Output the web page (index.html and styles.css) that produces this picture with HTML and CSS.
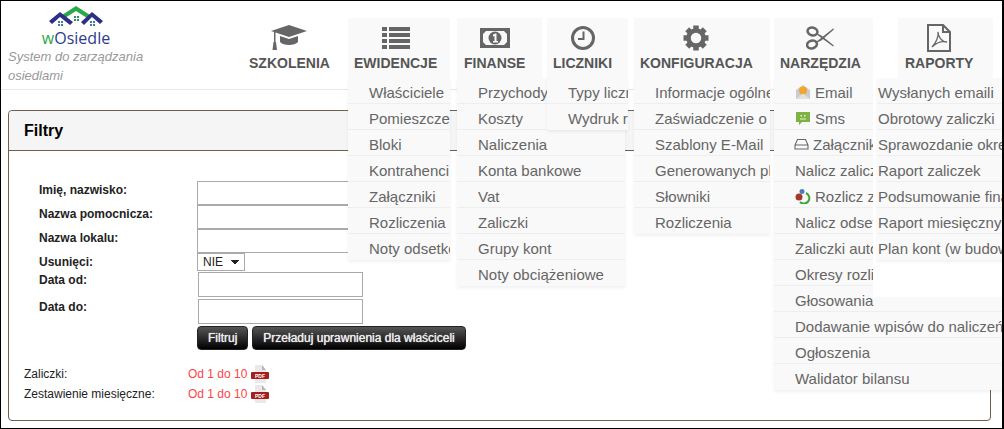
FILE: index.html
```html
<!DOCTYPE html>
<html>
<head>
    <title>wOsiedle</title>
    <link rel="stylesheet" href="styles.css">
</head>
<body>
    <div class="frame">
        <header class="header">
            <div class="brand">
                <div class="logo">
                    <svg class="logo-mark" width="56" height="22" viewBox="0 0 56 22">
                        <path d="M14 9 L28 0 L42 9 L39 12 L28 5 L17 12 Z" fill="#2aa84a"/>
                        <path d="M1 15 L12 6 L25 16 L22 19 L12 11 L4 18 Z" fill="#2e2f86"/>
                        <path d="M33 16 L44 6 L55 15 L52 18 L44 11 L36 19 Z" fill="#2e2f86"/>
                        <path d="M26 10h2v2h-2zM29 10h2v2h-2zM26 13h2v2h-2zM29 13h2v2h-2z" fill="#2e8c6a"/>
                        <path d="M10 15h2v2h-2zM13 15h2v2h-2zM10 18h2v2h-2zM13 18h2v2h-2z" fill="#3b7fa0"/>
                        <path d="M42 15h2v2h-2zM45 15h2v2h-2zM42 18h2v2h-2zM45 18h2v2h-2z" fill="#3b7fa0"/>
                    </svg>
                    <div class="logo-name"><span class="logo-w">w</span>Osiedle</div>
                </div>
                <div class="tagline">System do zarządzania osiedlami</div>
            </div>
            <nav class="nav">
                <div class="nav-item nav-plain nav-szkolenia">
                    <div class="nav-head">
                        <svg class="nav-icon" width="36" height="26" viewBox="0 0 36 26">
                            <path d="M0 6 L18 0 L36 6 L18 12 Z" fill="#666"/>
                            <path d="M9 11 L18 14 L27 11 L27 17 C24 21 12 21 9 17 Z" fill="#666"/>
                            <rect x="3" y="7" width="1.5" height="10" fill="#666"/>
                            <path d="M2.5 17 L5 17 L6 25 L1.500 25 Z" fill="#666"/>
                        </svg>
                        <div class="nav-label">SZKOLENIA</div>
                    </div>
                </div>
                <div class="nav-item nav-ewidencje">
                    <div class="nav-head">
                        <svg class="nav-icon" width="28" height="22" viewBox="0 0 28 22">
                            <path d="M0 0h5v4H0zM7 0h21v4H7zM0 6h5v4H0zM7 6h21v4H7zM0 12h5v4H0zM7 12h21v4H7zM0 18h5v4H0zM7 18h21v4H7z" fill="#666"/>
                        </svg>
                        <div class="nav-label">EWIDENCJE</div>
                    </div>
                    <ul class="dropdown">
                        <li>Właściciele</li>
                        <li>Pomieszczenia</li>
                        <li>Bloki</li>
                        <li>Kontrahenci</li>
                        <li>Załączniki</li>
                        <li>Rozliczenia</li>
                        <li>Noty odsetkowe</li>
                    </ul>
                </div>
                <div class="nav-item nav-finanse">
                    <div class="nav-head">
                        <svg class="nav-icon" width="30" height="20" viewBox="0 0 30 20">
                            <path fill-rule="evenodd" d="M0 0h30v20H0zM6 3 L3 6v8l3 3h18l3-3V6l-3-3z" fill="#666"/>
                            <circle cx="15" cy="10" r="6.500" fill="#666"/>
                            <path d="M13 6.500 L15.500 5.500 L16.500 5.500 L16.500 13 L18 13 L18 14.500 L13 14.500 L13 13 L14.500 13 L14.500 8 L13 8.500 Z" fill="#f9f9f9"/>
                        </svg>
                        <div class="nav-label">FINANSE</div>
                    </div>
                    <ul class="dropdown">
                        <li>Przychody</li>
                        <li>Koszty</li>
                        <li>Naliczenia</li>
                        <li>Konta bankowe</li>
                        <li>Vat</li>
                        <li>Zaliczki</li>
                        <li>Grupy kont</li>
                        <li>Noty obciążeniowe</li>
                    </ul>
                </div>
                <div class="nav-item nav-liczniki">
                    <div class="nav-head">
                        <svg class="nav-icon" width="26" height="26" viewBox="0 0 26 26">
                            <circle cx="13" cy="13" r="10.500" fill="none" stroke="#666" stroke-width="3"/>
                            <path d="M13.500 6.500v7.500H8" fill="none" stroke="#666" stroke-width="2"/>
                        </svg>
                        <div class="nav-label">LICZNIKI</div>
                    </div>
                    <ul class="dropdown">
                        <li>Typy liczników</li>
                        <li>Wydruk raportu</li>
                    </ul>
                </div>
                <div class="nav-item nav-konfiguracja">
                    <div class="nav-head">
                        <svg class="nav-icon" width="26" height="26" viewBox="-13 -13 26 26">
                            <g stroke="#666" stroke-width="5.500">
                                <line x1="-12.500" y1="0" x2="12.500" y2="0"/>
                                <line x1="0" y1="-12.500" x2="0" y2="12.500"/>
                                <line x1="-8.800" y1="-8.800" x2="8.800" y2="8.800"/>
                                <line x1="-8.800" y1="8.800" x2="8.800" y2="-8.800"/>
                            </g>
                            <circle r="7.500" fill="#f9f9f9" stroke="#666" stroke-width="4.500"/>
                        </svg>
                        <div class="nav-label">KONFIGURACJA</div>
                    </div>
                    <ul class="dropdown">
                        <li>Informacje ogólne</li>
                        <li>Zaświadczenie o saldzie</li>
                        <li>Szablony E-Mail</li>
                        <li>Generowanych plików</li>
                        <li>Słowniki</li>
                        <li>Rozliczenia</li>
                    </ul>
                </div>
                <div class="nav-item nav-narzedzia">
                    <div class="nav-head">
                        <svg class="nav-icon" width="28" height="24" viewBox="0 0 28 24">
                            <g fill="none" stroke="#666">
                                <ellipse cx="6.500" cy="5.500" rx="5" ry="3.800" stroke-width="2.500" transform="rotate(15 6.500 5.500)"/>
                                <ellipse cx="6" cy="18.500" rx="5" ry="3.800" stroke-width="2.500" transform="rotate(-15 6 18.500)"/>
                                <path d="M11 8 L27.500 20 L15 10 Z" stroke-width="1.200"/>
                                <path d="M11 16 L27.500 3 L15 14 Z" stroke-width="1.200"/>
                            </g>
                        </svg>
                        <div class="nav-label">NARZĘDZIA</div>
                    </div>
                    <ul class="dropdown dropdown-wide">
                        <li>
                            <svg class="row-icon" width="16" height="16" viewBox="0 0 16 16">
                                <path d="M1 6 L8 1 L15 6 V15 H1 Z" fill="#c9ccd2"/>
                                <circle cx="8" cy="6.500" r="4" fill="#f5a623"/>
                                <path d="M1 15 L8 9.500 L15 15 Z" fill="#dfe1e5"/>
                            </svg>Email
                        </li>
                        <li>
                            <svg class="row-icon" width="16" height="16" viewBox="0 0 16 16">
                                <path d="M1 2h14v10H7l-3 3v-3H1z" fill="#7cb342"/>
                                <path d="M5.500 5h1.500v1.500H5.500zM9 5h1.500v1.500H9zM5 8.500h6v1H5z" fill="#e6f2d5"/>
                            </svg>Sms
                        </li>
                        <li class="row-tight">
                            <svg class="row-icon" width="15" height="16" viewBox="0 0 15 16">
                                <path d="M3.500 3.500h8L14 9v4H1V9zM1 9h13" fill="none" stroke="#666" stroke-width="1.100"/>
                            </svg>Załączniki
                        </li>
                        <li>Nalicz zaliczki</li>
                        <li>
                            <svg class="row-icon" width="16" height="16" viewBox="0 0 16 16">
                                <path d="M11 5 A5.500 5.500 0 1 1 5 14" fill="none" stroke="#3aa935" stroke-width="2"/>
                                <circle cx="7" cy="3.500" r="2.500" fill="#4a7ebb"/>
                                <circle cx="4" cy="9" r="3.500" fill="#a5392c"/>
                            </svg>Rozlicz zaliczki
                        </li>
                        <li>Nalicz odsetki</li>
                        <li>Zaliczki automatyczne</li>
                        <li>Okresy rozliczeniowe</li>
                        <li>Głosowania</li>
                        <li>Dodawanie wpisów do naliczeń</li>
                        <li>Ogłoszenia</li>
                        <li>Walidator bilansu</li>
                    </ul>
                </div>
                <div class="nav-item nav-raporty">
                    <div class="nav-head">
                        <svg class="nav-icon" width="24" height="28" viewBox="0 0 24 28">
                            <path d="M1 1h15l7 7v19H1zM16 1v7h7" fill="none" stroke="#666" stroke-width="2"/>
                            <path d="M5 23 C9 19 12 12 11 8 C11 13 15 18 20 18 C15 17 9 19 5 23 Z" fill="none" stroke="#666" stroke-width="1.300"/>
                        </svg>
                        <div class="nav-label">RAPORTY</div>
                    </div>
                    <div class="dropdown-cover">
                        <ul class="dropdown dropdown-inner">
                            <li>Wysłanych emaili</li>
                            <li>Obrotowy zaliczki</li>
                            <li>Sprawozdanie okresowe</li>
                            <li>Raport zaliczek</li>
                            <li>Podsumowanie finansowe</li>
                            <li>Raport miesięczny</li>
                            <li>Plan kont (w budowie)</li>
                        </ul>
                    </div>
                </div>
            </nav>
        </header>

        <section class="panel">
            <h2 class="panel-title">Filtry</h2>
            <div class="panel-body">
                <form class="filter-form">
                    <label class="filter-label" for="name">Imię, nazwisko:</label>
                    <input class="filter-input" type="text" id="name" />
                    <label class="filter-label" for="alias">Nazwa pomocnicza:</label>
                    <input class="filter-input" type="text" id="alias" />
                    <label class="filter-label" for="local">Nazwa lokalu:</label>
                    <input class="filter-input" type="text" id="local" />
                    <label class="filter-label" for="deleted">Usunięci:</label>
                    <select class="filter-select" id="deleted"><option>NIE</option></select>
                    <label class="filter-label filter-label-date" for="date_from">Data od:</label>
                    <input class="filter-input filter-date" type="text" id="date_from" />
                    <label class="filter-label filter-label-date" for="date_to">Data do:</label>
                    <input class="filter-input filter-date" type="text" id="date_to" />
                    <div class="button-group">
                        <button type="button" class="btn">Filtruj</button>
                        <button type="button" class="btn">Przeładuj uprawnienia dla właściceli</button>
                    </div>
                </form>
                <div class="downloads">
                    <div class="download-name">Zaliczki:</div>
                    <div class="download-link">
                        Od 1 do 10
                        <svg class="pdf-icon" width="18" height="19" viewBox="0 0 18 19">
                            <path d="M4 0h7l4 5v13H4z" fill="#e9e9e9"/>
                            <path d="M11 0l4 5h-4z" fill="#b5b5b5"/>
                            <rect x="0" y="7" width="18" height="7" rx="1" fill="#a5201d"/>
                            <text x="9" y="12.500" class="pdf-text">PDF</text>
                        </svg>
                    </div>
                    <div class="download-name">Zestawienie miesięczne:</div>
                    <div class="download-link">
                        Od 1 do 10
                        <svg class="pdf-icon" width="18" height="19" viewBox="0 0 18 19">
                            <path d="M4 0h7l4 5v13H4z" fill="#e9e9e9"/>
                            <path d="M11 0l4 5h-4z" fill="#b5b5b5"/>
                            <rect x="0" y="7" width="18" height="7" rx="1" fill="#a5201d"/>
                            <text x="9" y="12.500" class="pdf-text">PDF</text>
                        </svg>
                    </div>
                </div>
            </div>
        </section>
    </div>
</body>
</html>
```

FILE: styles.css
```css
html, body {
    margin: 0;
    padding: 0;
}
body {
    font-family: "Liberation Sans", Arial, sans-serif;
    background-color: white;
    color: #222;
}
.frame {
    box-sizing: border-box;
    width: 1004px;
    height: 429px;
    border: 1px solid black;
    border-right-width: 2px;
    overflow: hidden;
}
.header {
    display: flex;
    box-sizing: border-box;
    height: 89px;
    border-bottom: 1px solid #e7e7e7;
}
.brand {
    box-sizing: border-box;
    width: 242px;
    padding: 5px 0 0 7px;
    flex-shrink: 0;
}
.logo {
    width: 136px;
    text-align: center;
}
.logo-mark {
    display: block;
    margin: 0 auto;
}
.logo-name {
    margin-top: 1px;
    font-family: "Open Sans", sans-serif;
    font-size: 16px;
    line-height: 18px;
    color: #2e3a8c;
}
.logo-w {
    color: #2aa84a;
}
.tagline {
    width: 150px;
    font-size: 13px;
    font-style: italic;
    line-height: 19px;
    color: #999;
}
.nav {
    display: flex;
    padding-top: 17px;
}
.nav-item {
    position: relative;
    box-sizing: border-box;
    height: 61px;
    background-color: #f9f9f9;
    border-bottom: 1px solid #eee;
    flex-shrink: 0;
}
.nav-plain {
    background: none;
    border-bottom: none;
}
.nav-head {
    display: flex;
    flex-direction: column;
    align-items: center;
    width: fit-content;
    height: 51px;
    padding: 2px 0 0 6px;
}
.nav-icon {
    display: block;
    margin: auto 0;
}
.nav-label {
    font-size: 14px;
    font-weight: bold;
    line-height: 16px;
    color: #555;
    white-space: nowrap;
}
.nav-szkolenia { width: 99px; }
.nav-ewidencje { width: 102px; margin-left: 6px; }
.nav-finanse { width: 85px; margin-left: 7px; }
.nav-liczniki { width: 81px; margin-left: 5px; }
.nav-konfiguracja { width: 136px; margin-left: 6px; }
.nav-narzedzia { width: 99px; margin-left: 4px; }
.nav-raporty { width: 95px; margin-left: 25px; }
.nav-finanse .nav-head { padding-left: 7px; }
.nav-raporty .nav-head { padding-left: 7px; }

.dropdown {
    position: absolute;
    top: 60px;
    left: 0;
    width: 100%;
    margin: 0;
    padding: 0;
    list-style: none;
    overflow: hidden;
    background-color: #f9f9f9;
    box-shadow: 0 2px 3px rgba(0,0,0,0.06);
}
.dropdown li {
    box-sizing: border-box;
    display: flex;
    align-items: center;
    height: 26px;
    padding: 3px 0 0 21px;
    border-bottom: 1px solid #eee;
    font-size: 15px;
    color: #666;
    white-space: nowrap;
}
.dropdown li:last-child {
    border-bottom-color: transparent;
}
.nav-finanse .dropdown {
    width: 168px;
}
.nav-narzedzia .dropdown-wide {
    width: 240px;
}
.row-icon {
    margin-right: 4px;
    flex-shrink: 0;
}
.dropdown li.row-tight {
    padding-left: 20px;
}
.dropdown-cover {
    position: absolute;
    top: 60px;
    left: -25px;
    width: 130px;
    height: 219px;
    background-color: white;
}
.dropdown-cover .dropdown-inner {
    top: 0;
    left: 4px;
}
.dropdown-cover .dropdown-inner li {
    padding-left: 1px;
}

.panel {
    box-sizing: border-box;
    width: 983px;
    height: 311px;
    margin: 20px 0 0 7px;
    border: 1px solid #6f5f4f;
    border-radius: 4px;
}
.panel-title {
    box-sizing: border-box;
    height: 40px;
    margin: 0;
    padding-left: 15px;
    font-size: 16px;
    line-height: 39px;
    color: black;
    background-color: #f5f5f5;
    border-bottom: 1px solid #6f5f4f;
    border-radius: 4px 4px 0 0;
}
.panel-body {
    padding: 30px 0 0 15px;
}
.filter-form {
    display: grid;
    grid-template-columns: 158px 170px;
    padding-left: 15px;
}
.filter-label {
    padding-top: 2px;
    font-size: 12px;
    font-weight: bold;
    line-height: 14px;
    color: #222;
}
.filter-label-date {
    padding-top: 1px;
}
.filter-input {
    box-sizing: border-box;
    width: 166px;
    height: 24px;
    margin: 0;
    border: 1px solid #aaa;
    background-color: white;
}
.filter-date {
    width: 165px;
    height: 25px;
    margin: 0 0 2px 1px;
}
.filter-select {
    box-sizing: border-box;
    width: 48px;
    height: 18px;
    margin: 0 0 1px;
    padding: 0 0 0 5px;
    border: 1px solid #aaa;
    appearance: none;
    background-color: white;
    background-image: linear-gradient(45deg, transparent 50%, #222 50%), linear-gradient(-45deg, transparent 50%, #222 50%);
    background-size: 4px 4px;
    background-position: 33px 6px, 37px 6px;
    background-repeat: no-repeat;
    font-family: inherit;
    font-size: 12px;
    color: #222;
}
.button-group {
    grid-column: 2;
    display: flex;
    gap: 4px;
    width: 280px;
}
.btn {
    height: 24px;
    padding: 0 10px;
    border: 1px solid #222;
    border-radius: 4px;
    background: linear-gradient(#555, #000);
    font-family: inherit;
    font-size: 12px;
    color: #eee;
    text-shadow: 0 0 1px #fff;
    white-space: nowrap;
    cursor: pointer;
}
.downloads {
    display: grid;
    grid-template-columns: 164px auto;
    grid-auto-rows: 20px;
    margin-top: 14px;
    font-size: 12px;
    align-items: center;
}
.download-name {
    color: #222;
}
.download-link {
    display: flex;
    align-items: center;
    gap: 4px;
    color: #f44;
}
.pdf-icon {
    flex-shrink: 0;
}
.pdf-text {
    font-size: 5px;
    font-weight: bold;
    fill: white;
    text-anchor: middle;
}
```
